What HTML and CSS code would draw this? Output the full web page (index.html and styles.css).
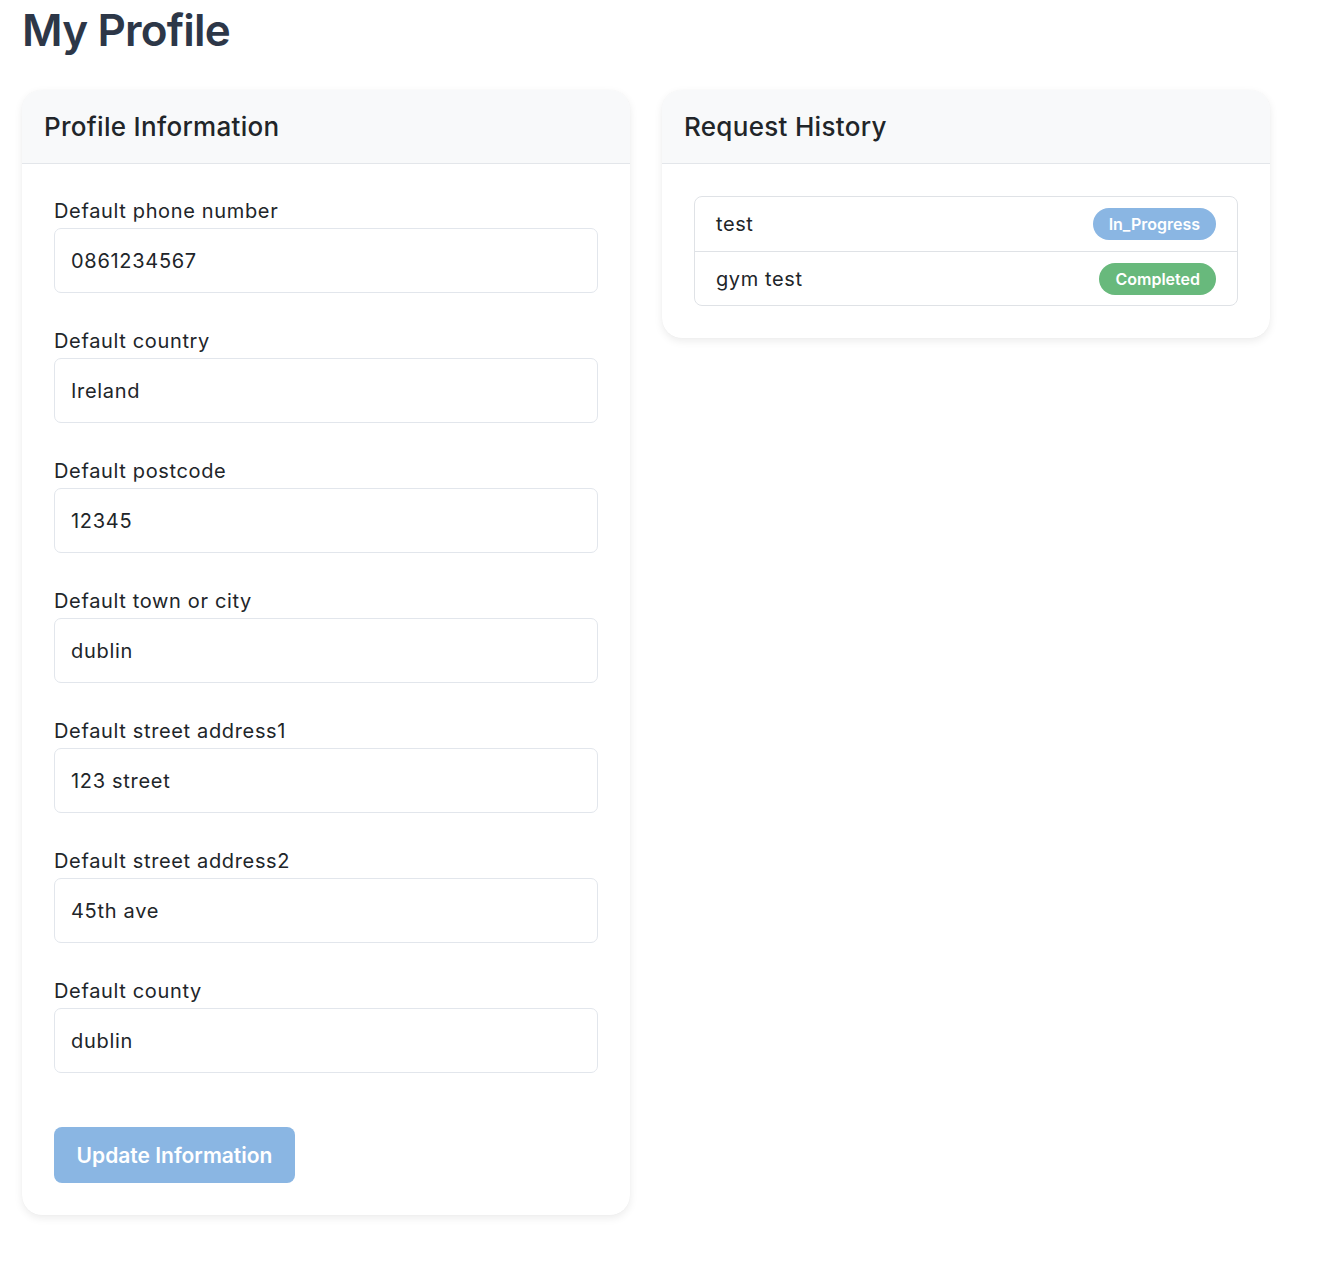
FILE: index.html
```html
<!DOCTYPE html>
<html lang="en">
<head>
<meta charset="utf-8">
<title>My Profile</title>
<link rel="stylesheet" href="styles.css">
</head>
<body>
<main class="page">
  <h1 class="page-title">My Profile</h1>
  <div class="columns">
    <section class="card">
      <header class="card-header"><h2>Profile Information</h2></header>
      <form class="card-body">
        <div class="form-group">
          <label class="form-label">Default phone number</label>
          <input class="form-input" type="text" value="0861234567">
        </div>
        <div class="form-group">
          <label class="form-label">Default country</label>
          <input class="form-input" type="text" value="Ireland">
        </div>
        <div class="form-group">
          <label class="form-label">Default postcode</label>
          <input class="form-input" type="text" value="12345">
        </div>
        <div class="form-group">
          <label class="form-label">Default town or city</label>
          <input class="form-input" type="text" value="dublin">
        </div>
        <div class="form-group">
          <label class="form-label">Default street address1</label>
          <input class="form-input" type="text" value="123 street">
        </div>
        <div class="form-group">
          <label class="form-label">Default street address2</label>
          <input class="form-input" type="text" value="45th ave">
        </div>
        <div class="form-group">
          <label class="form-label">Default county</label>
          <input class="form-input" type="text" value="dublin">
        </div>
        <button class="btn" type="button">Update Information</button>
      </form>
    </section>
    <section class="card card-short">
      <header class="card-header"><h2>Request History</h2></header>
      <div class="card-body">
        <ul class="list">
          <li class="list-item"><span>test</span><span class="badge badge-blue">In_Progress</span></li>
          <li class="list-item"><span>gym test</span><span class="badge badge-green">Completed</span></li>
        </ul>
      </div>
    </section>
  </div>
</main>
</body>
</html>
```

FILE: styles.css
```css
* { box-sizing: border-box; }
html, body { margin: 0; padding: 0; background: #ffffff; }
body {
  font-family: Inter, "Noto Sans", "Liberation Sans", sans-serif;
  color: #212529;
}
.page {
  padding: 4px 0 40px 22px;
}
.page-title {
  margin: 0 0 33px 0;
  font-size: 44px;
  line-height: 53px;
  font-weight: 600;
  color: #2d3748;
  letter-spacing: -0.8px;
}
.columns {
  display: grid;
  grid-template-columns: 608px 608px;
  column-gap: 32px;
  align-items: start;
}
.card {
  background: #ffffff;
  border-radius: 20px;
  box-shadow: 0 3px 8px rgba(0, 0, 0, 0.08), 0 0 1px rgba(0, 0, 0, 0.06);
  overflow: hidden;
}
.card-header {
  background: #f8f9fa;
  border-bottom: 1px solid #e3e6ea;
  height: 74px;
  padding: 0 22px;
  display: flex;
  align-items: center;
}
.card-header h2 {
  margin: 0;
  font-size: 26px;
  font-weight: 500;
  color: #212529;
  letter-spacing: 0.3px;
}
.card-body {
  padding: 32px;
  display: flex;
  flex-direction: column;
}
.form-group {
  display: flex;
  flex-direction: column;
  margin-bottom: 33px;
}
.form-label {
  font-size: 20px;
  line-height: 30px;
  margin-bottom: 2px;
  color: #212529;
  letter-spacing: 0.65px;
}
.form-input {
  height: 65px;
  border: 1px solid #e2e6ec;
  border-radius: 7px;
  padding: 0 16px;
  font-family: inherit;
  font-size: 20px;
  color: #212529;
  background: #ffffff;
  outline: none;
  letter-spacing: 0.7px;
}
.btn {
  align-self: flex-start;
  margin-top: 21px;
  width: 241px;
  height: 56px;
  border: none;
  border-radius: 8px;
  background: #8ab6e3;
  color: #ffffff;
  font-family: inherit;
  font-size: 21px;
  font-weight: 600;
  padding: 0;
  letter-spacing: 0;
}
.list {
  list-style: none;
  margin: 0;
  padding: 0;
  border: 1px solid #dfe2e6;
  border-radius: 8px;
}
.list-item {
  height: 54px;
  display: flex;
  align-items: center;
  justify-content: space-between;
  padding: 0 21px;
  font-size: 20px;
  letter-spacing: 0.6px;
}
.list-item + .list-item {
  border-top: 1px solid #dfe2e6;
}
.badge {
  display: inline-flex;
  align-items: center;
  height: 32px;
  padding: 0 16px;
  border-radius: 16px;
  color: #ffffff;
  font-size: 16px;
  font-weight: 600;
  letter-spacing: 0;
}
.badge-blue { background: #8ab6e3; }
.badge-green { background: #68b97c; }
```
